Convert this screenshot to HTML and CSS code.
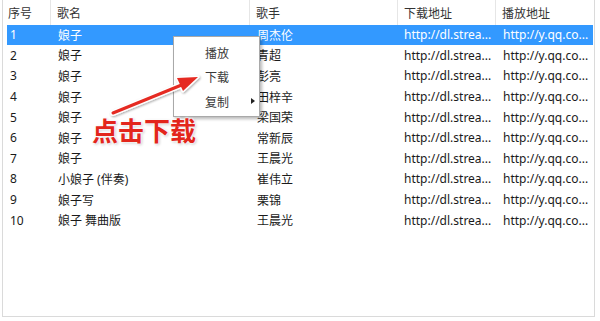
FILE: index.html
```html
<!DOCTYPE html>
<html lang="zh">
<head>
<meta charset="utf-8">
<title>歌曲列表</title>
<link rel="stylesheet" href="styles.css">
</head>
<body>
<div class="stage">
  <div class="list">
    <div class="head">
      <div class="hc c1">序号</div>
      <div class="hc">歌名</div>
      <div class="hc">歌手</div>
      <div class="hc">下载地址</div>
      <div class="hc last">播放地址</div>
    </div>
    <div class="rows">
      <div class="row sel"><span class="n">1</span><span>娘子</span><span>周杰伦</span><span class="u">http://dl.strea...</span><span class="u">http://y.qq.co...</span></div>
      <div class="row"><span class="n">2</span><span>娘子</span><span>青超</span><span class="u">http://dl.strea...</span><span class="u">http://y.qq.co...</span></div>
      <div class="row"><span class="n">3</span><span>娘子</span><span>彭亮</span><span class="u">http://dl.strea...</span><span class="u">http://y.qq.co...</span></div>
      <div class="row"><span class="n">4</span><span>娘子</span><span>田梓辛</span><span class="u">http://dl.strea...</span><span class="u">http://y.qq.co...</span></div>
      <div class="row"><span class="n">5</span><span>娘子</span><span>梁国荣</span><span class="u">http://dl.strea...</span><span class="u">http://y.qq.co...</span></div>
      <div class="row"><span class="n">6</span><span>娘子</span><span>常新辰</span><span class="u">http://dl.strea...</span><span class="u">http://y.qq.co...</span></div>
      <div class="row"><span class="n">7</span><span>娘子</span><span>王晨光</span><span class="u">http://dl.strea...</span><span class="u">http://y.qq.co...</span></div>
      <div class="row"><span class="n">8</span><span>小娘子 (伴奏)</span><span>崔伟立</span><span class="u">http://dl.strea...</span><span class="u">http://y.qq.co...</span></div>
      <div class="row"><span class="n">9</span><span>娘子写</span><span>栗锦</span><span class="u">http://dl.strea...</span><span class="u">http://y.qq.co...</span></div>
      <div class="row"><span class="n">10</span><span>娘子 舞曲版</span><span>王晨光</span><span class="u">http://dl.strea...</span><span class="u">http://y.qq.co...</span></div>
    </div>
  </div>

  <div class="menu">
    <div class="mi">播放</div>
    <div class="mi">下载</div>
    <div class="mi sub">复制<span class="tri"></span></div>
  </div>

  <svg class="arrow" width="600" height="321" viewBox="0 0 600 321">
    <defs>
      <filter id="sh" x="-20%" y="-20%" width="140%" height="140%">
        <feDropShadow dx="1" dy="1" stdDeviation="1" flood-color="#000" flood-opacity="0.35"/>
      </filter>
    </defs>
    <g filter="url(#sh)">
      <line x1="113" y1="113" x2="184" y2="84" stroke="#fff" stroke-width="6" stroke-linecap="round"/>
      <polygon points="198,77 183,91 177,78" fill="#fff" stroke="#fff" stroke-width="3" stroke-linejoin="round"/>
      <line x1="113" y1="113" x2="184" y2="84" stroke="#e52a20" stroke-width="3" stroke-linecap="round"/>
      <polygon points="198,77 183,91 177,78" fill="#e52a20"/>
    </g>
  </svg>

  <div class="note">点击下载</div>
</div>
</body>
</html>
```
FILE: styles.css
```css
* { box-sizing: border-box; }
html, body { margin: 0; padding: 0; background: #fff; }
body {
  font-family: "Noto Sans", "Noto Sans CJK SC", sans-serif;
  font-size: 12px;
  color: #1a1a1a;
}
.stage {
  position: relative;
  width: 600px;
  height: 321px;
  overflow: hidden;
}
.list {
  margin-left: 2px;
  width: 593px;
  height: 317px;
  border: 1px solid #dadada;
  border-top: none;
}
.head {
  display: grid;
  grid-template-columns: 48px 199px 148px 98px 98px;
  height: 24.5px;
}
.hc {
  display: flex;
  align-items: center;
  padding-left: 6px;
  border-right: 1px solid #e6e6e6;
  font-family: "Noto Sans CJK SC", sans-serif;
  color: #333;
}
.hc.c1 { padding-left: 5px; }
.hc.last { border-right: none; }
.rows {
  padding-left: 4px;
  padding-right: 1px;
}
.row {
  display: grid;
  grid-template-columns: 44px 199px 148px 98px 97px;
  height: 20.6px;
  align-items: center;
  font-family: "Noto Sans", "Noto Sans CJK SC", sans-serif;
}
.row span { padding-left: 7px; white-space: nowrap; overflow: hidden; }
.row span.n { padding-left: 3px; }
.row span.u { padding-left: 6px; }
.row span.u:last-child { padding-left: 7px; }
.row.sel { background: #3399ff; color: #fff; }
.menu {
  position: absolute;
  left: 173px;
  top: 36px;
  width: 87px;
  height: 81px;
  background: #fff;
  border: 1px solid #a9a9a9;
  box-shadow: 2px 2px 3px rgba(0,0,0,0.28);
  padding-top: 3px;
  font-family: "Noto Sans CJK SC", sans-serif;
  color: #3a3a3a;
}
.mi {
  position: relative;
  height: 24.5px;
  display: flex;
  align-items: center;
  padding-left: 31px;
}
.tri {
  position: absolute;
  left: 77px;
  top: 9px;
  width: 0;
  height: 0;
  border-top: 3.5px solid transparent;
  border-bottom: 3.5px solid transparent;
  border-left: 4px solid #222;
}
.arrow {
  position: absolute;
  left: 0;
  top: 0;
  pointer-events: none;
}
.note {
  position: absolute;
  left: 92px;
  top: 112px;
  font-family: "Noto Sans CJK SC", sans-serif;
  font-weight: bold;
  font-size: 26px;
  line-height: 36px;
  color: #e3261c;
  text-shadow: 0 0 2px #fff, 0 0 2px #fff, 0 0 3px #fff, 1px 1px 3px rgba(0,0,0,0.3);
}
```
